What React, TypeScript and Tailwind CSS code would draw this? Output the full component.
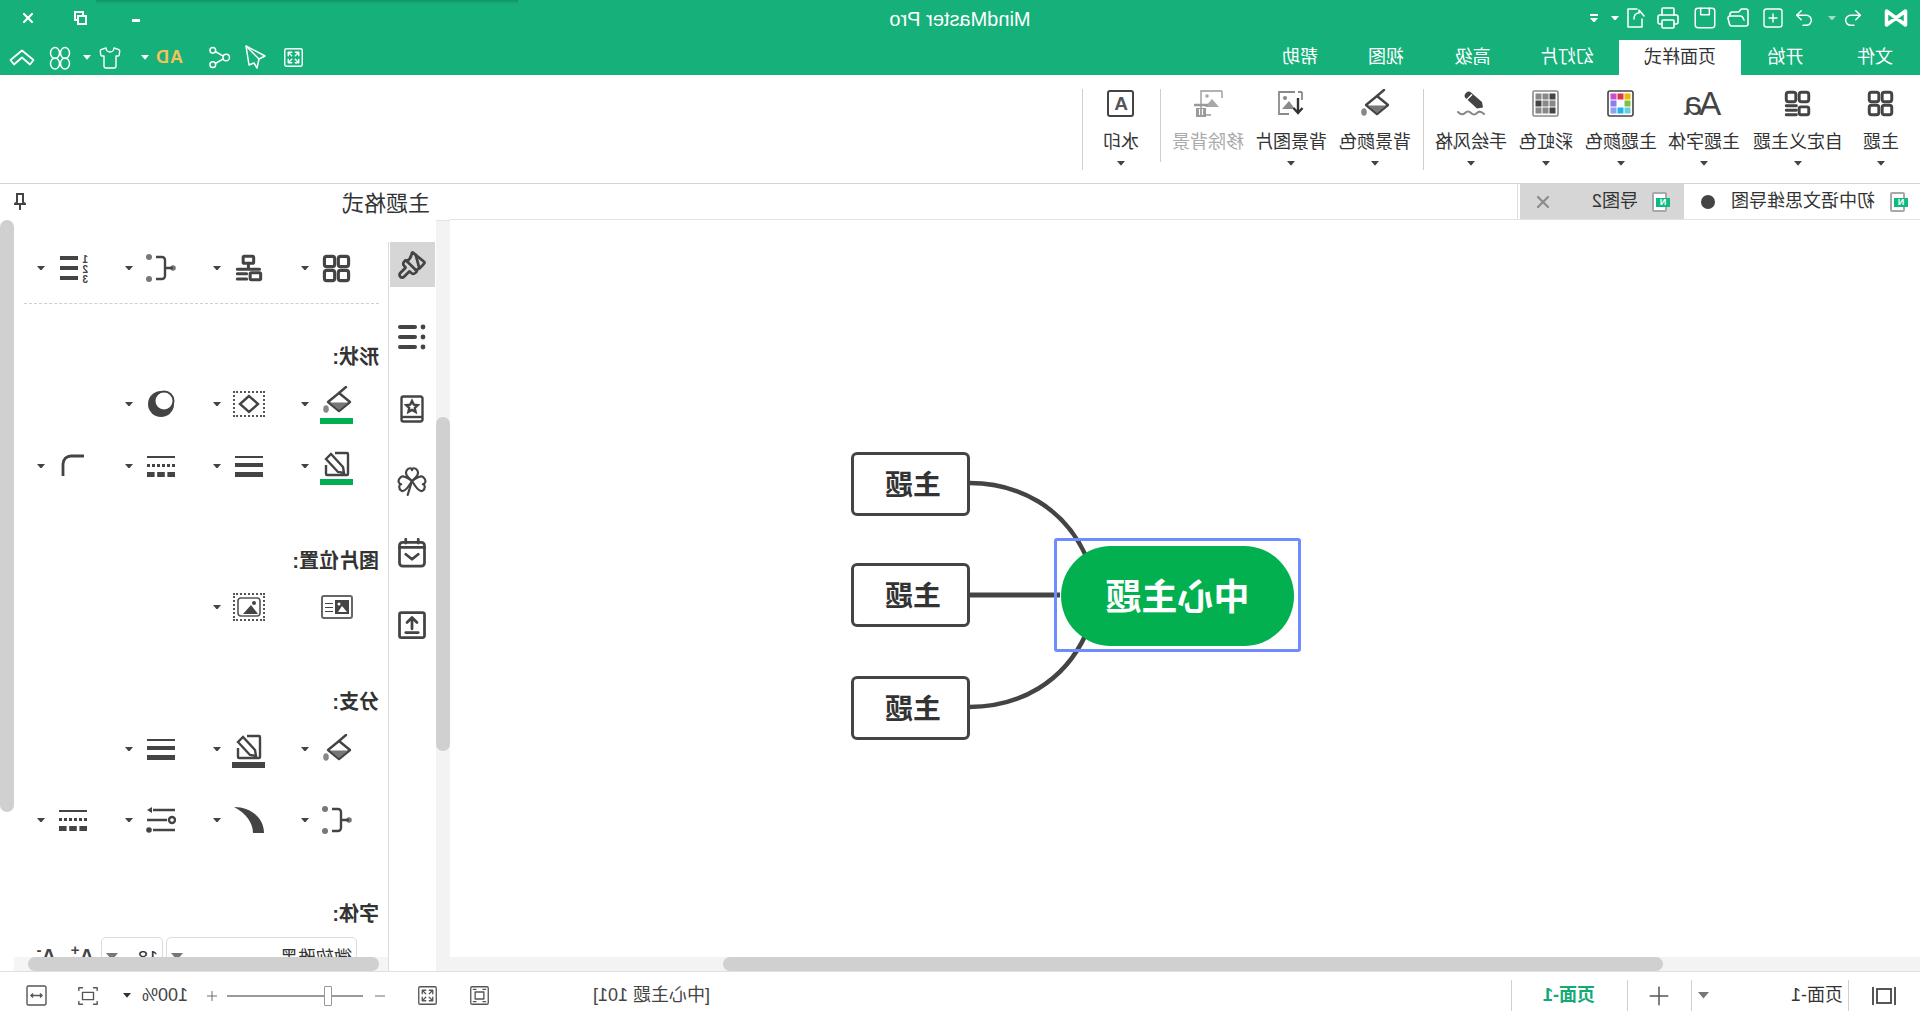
import React from "react";
import { Undo2, Redo2, Printer, FolderOpen, Paintbrush, X, Plus, Minus, Shirt } from "lucide-react";

type P = { size?: number; sw?: number; className?: string; children?: React.ReactNode; h?: number };
const Ic = ({ size = 24, h, sw = 2, className = "", children }: P) => (
  <svg width={size} height={h ?? size} viewBox="0 0 24 24" fill="none" stroke="currentColor" strokeWidth={sw} strokeLinecap="round" strokeLinejoin="round" className={"shrink-0 " + className}>
    {children}
  </svg>
);

const Caret = ({ className = "text-[#8a8a8a]", w = 8 }: { className?: string; w?: number }) => (
  <svg width={w} height={w * 0.6} viewBox="0 0 10 6" className={"shrink-0 " + className}>
    <path d="M0 0h10L5 6z" fill="currentColor" />
  </svg>
);

const Grid4 = ({ size = 27 }: { size?: number }) => (
  <Ic size={size} sw={2.6}>
    <rect x="2" y="2" width="8.5" height="8.5" rx="2" />
    <rect x="13.5" y="2" width="8.5" height="8.5" rx="2" />
    <rect x="2" y="13.5" width="8.5" height="8.5" rx="2" />
    <rect x="13.5" y="13.5" width="8.5" height="8.5" rx="2" />
  </Ic>
);
const Grid3Lines = () => (
  <Ic size={27} sw={2.6}>
    <rect x="2" y="2" width="8.5" height="8.5" rx="2" />
    <rect x="13.5" y="2" width="8.5" height="8.5" rx="2" />
    <rect x="2" y="15" width="8.5" height="7" rx="1.5" />
    <path d="M13 14h9M13 18h9M13 22h9" />
  </Ic>
);
const Palette = () => (
  <svg width="27" height="27" viewBox="0 0 27 27" className="shrink-0">
    <rect x="1" y="1" width="25" height="25" rx="2" fill="#fff" stroke="#444" strokeWidth="1.6" />
    {[
      ["#f3b800", 3.5, 3.5], ["#e0334f", 10.5, 3.5], ["#c84fc8", 17.5, 3.5],
      ["#7dc243", 3.5, 10.5], ["#8d7cf0", 17.5, 10.5],
      ["#6ecbe0", 3.5, 17.5], ["#1cb5ef", 10.5, 17.5], ["#8fa0f5", 17.5, 17.5],
    ].map(([c, x, y], i) => (
      <rect key={i} x={x as number} y={y as number} width="6" height="6" fill={c as string} />
    ))}
  </svg>
);
const Rainbow = () => (
  <svg width="27" height="27" viewBox="0 0 27 27" className="shrink-0">
    <rect x="1" y="1" width="25" height="25" rx="1.5" fill="#fff" stroke="#8a8a8a" strokeWidth="1.6" />
    {[
      ["#444", 3.5, 3.5], ["#888", 10.5, 3.5], ["#888", 17.5, 3.5],
      ["#888", 3.5, 10.5], ["#888", 10.5, 10.5], ["#444", 17.5, 10.5],
      ["#444", 3.5, 17.5], ["#888", 10.5, 17.5], ["#888", 17.5, 17.5],
    ].map(([c, x, y], i) => (
      <rect key={i} x={x as number} y={y as number} width="6" height="6" fill={c as string} />
    ))}
  </svg>
);
const HandDraw = () => (
  <svg width="30" height="27" viewBox="0 0 30 27" className="shrink-0">
    <path d="M3 17.5 4 12 15 2.5c1.500-1.300 3-1.300 4.500 0l1 1c1.300 1.500 1.300 3 0 4.500L9 18.500z" fill="#444" />
    <path d="M14 4.500l6 6" stroke="#fff" strokeWidth="1.5" />
    <path d="M2 24c3-3 5-3 7-1s4 2 6 0 4-2 6 0 4 2 7-1" fill="none" stroke="#888" strokeWidth="2" strokeLinecap="round" />
  </svg>
);
const Bucket = ({ size = 30 }: { size?: number }) => (
  <svg width={size} height={size} viewBox="0 0 30 30" className="shrink-0">
    <path d="M13 7 24 16 13 25 2 16z" fill="#fff" stroke="#444" strokeWidth="2.4" strokeLinejoin="round" />
    <path d="M4 16.500h18L13 24z" fill="#777" />
    <path d="M13 7 6 1" stroke="#444" strokeWidth="2.4" strokeLinecap="round" />
    <ellipse cx="26" cy="23" rx="2.800" ry="3.800" fill="#888" />
  </svg>
);
const BgImage = () => (
  <svg width="27" height="27" viewBox="0 0 27 27" className="shrink-0" fill="none">
    <path d="M9 2h16v22H15" stroke="#8a8a8a" strokeWidth="1.8" />
    <path d="M2 2h4M2 2v8" stroke="#8a8a8a" strokeWidth="1.8" />
    <path d="M9 19l6-8 7 8z" fill="#8a8a8a" />
    <circle cx="19" cy="8" r="2" fill="#8a8a8a" />
    <path d="M6 8v14M1.500 18 6 23l4.500-5" stroke="#333" strokeWidth="2.4" />
  </svg>
);
const RemoveBg = () => (
  <svg width="34" height="27" viewBox="0 0 34 27" className="shrink-0" fill="none">
    <path d="M3 1h21v24H14" stroke="#b2b2b2" strokeWidth="1.8" />
    <path d="M3 1v7" stroke="#b2b2b2" strokeWidth="1.8" />
    <path d="M6 17l7-8 7 8z" fill="#a8a8a8" />
    <circle cx="18" cy="6" r="1.800" fill="#a8a8a8" />
    <path d="M17 15h14" stroke="#999" strokeWidth="2.500" />
    <rect x="19" y="18" width="10" height="9" fill="#999" />
    <path d="M22.500 19v6M25.500 19v6" stroke="#fff" strokeWidth="1.200" />
  </svg>
);
const Watermark = () => (
  <div className="w-[27px] h-[27px] border-[2.5px] border-[#444] rounded-[3px] flex items-center justify-center text-[19px] leading-none font-bold text-[#555]">
    A
  </div>
);

type Rib = { label: string; w: string; icon: React.ReactNode; caret?: boolean; dim?: boolean };
const ribbon: (Rib | "sep" | "sep2" | "sep3")[] = [
  { label: "主题", w: "w-[78px]", icon: <Grid4 />, caret: true },
  { label: "自定义主题", w: "w-[88px]", icon: <Grid3Lines />, caret: true },
  { label: "主题字体", w: "w-[100px]", icon: <span className="text-[33px] leading-[27px] h-[27px] tracking-[-3px] text-[#444]">Aa</span>, caret: true },
  { label: "主题颜色", w: "w-[66px]", icon: <Palette />, caret: true },
  { label: "彩虹色", w: "w-[84px]", icon: <Rainbow />, caret: true },
  { label: "手绘风格", w: "w-[66px]", icon: <HandDraw />, caret: true },
  "sep",
  { label: "背景颜色", w: "w-[96px]", icon: <Bucket />, caret: true },
  { label: "背景图片", w: "w-[72px]", icon: <BgImage />, caret: true },
  { label: "移除背景", w: "w-[94px]", icon: <RemoveBg />, dim: true },
  "sep2",
  { label: "水印", w: "w-[76px]", icon: <Watermark />, caret: true },
  "sep3",
];

const TitleBar = () => (
  <div className="h-[75px] shrink-0 bg-[#16b07a] text-white relative">
    <div className="absolute top-0 left-[1402px] w-[422px] h-[4px] bg-linear-to-b from-[#12946a] to-[#16b07a]" />
    <div className="h-[40px] grid grid-cols-[1fr_auto_1fr] items-start">
      <div className="flex items-center h-[36px]">
        <div className="w-[48px] flex justify-center">
          <svg width="24" height="20" viewBox="0 0 24 20" fill="none" stroke="#fff" strokeWidth="3.5" strokeLinejoin="round">
            <path d="M2.500 3v14l9.500-7 9.500 7V3L12 10z" />
          </svg>
        </div>
        <Undo2 size={22} strokeWidth={1.6} className="ml-[8px] shrink-0" />
        <Caret className="ml-[6px] text-[#9fdcc4]" />
        <Redo2 size={22} strokeWidth={1.6} className="ml-[13px] shrink-0" />
        <Ic size={24} sw={1.4} className="ml-[8px]">
          <rect x="3" y="3" width="18" height="18" rx="2.500" />
          <path d="M12 8v8M8 12h8" />
        </Ic>
        <FolderOpen size={24} strokeWidth={1.6} className="ml-[11px] shrink-0" />
        <Ic size={26} sw={1.4} className="ml-[8px]">
          <rect x="3" y="3" width="18" height="18" rx="2.500" />
          <path d="M8 3v6h8V3" />
        </Ic>
        <Printer size={24} strokeWidth={1.6} className="ml-[12px] shrink-0" />
        <Ic size={24} sw={1.5} className="ml-[9px]">
          <path d="M10 3h9v18H5v-8" />
          <path d="M3 10l5-6 0 3c3 0 5 2 5 6" />
        </Ic>
        <Caret className="ml-[4px] text-white" />
        <div className="ml-[13px] w-[8px] flex flex-col gap-[2px] items-center">
          <div className="w-[8px] h-[2px] bg-white" />
          <Caret className="text-white" />
        </div>
      </div>
      <div className="h-[38px] flex items-center text-[20px]">MindMaster Pro</div>
      <div className="flex items-center justify-end h-[36px]">
        <div className="w-[60px] flex justify-center pt-[4px]"><div className="w-[8px] h-[3px] bg-white" /></div>
        <div className="w-[50px] flex justify-center">
          <svg width="13" height="14" viewBox="0 0 13 14" fill="none" stroke="#fff" strokeWidth="2">
            <rect x="1" y="5" width="8" height="8" />
            <path d="M4 5V1h8v8H9" />
          </svg>
        </div>
        <div className="w-[56px] flex justify-center"><X size={16} strokeWidth={3.2} /></div>
      </div>
    </div>
    <div className="h-[35px] flex items-center">
      {[
        ["文件", "w-[90px]", false],
        ["开始", "w-[89px]", false],
        ["页面样式", "w-[122px]", true],
        ["幻灯片", "w-[104px]", false],
        ["高级", "w-[85px]", false],
        ["视图", "w-[88px]", false],
        ["帮助", "w-[84px]", false],
      ].map(([t, w, a]) => (
        <div key={t as string} className={(w as string) + " h-[35px] shrink-0 flex items-center justify-center text-[18px] " + (a ? "bg-white text-[#333]" : "text-white")}>
          {t as string}
        </div>
      ))}
      <Ic size={21} sw={1.6} className="ml-[954px]">
        <rect x="2" y="2" width="20" height="20" rx="2" />
        <path d="M6 10V6h4M18 10V6h-4M6 14v4h4M18 14v4h-4M6 6l4 4M18 6l-4 4M6 18l4-4M18 18l-4-4" />
      </Ic>
      <svg width="22" height="26" viewBox="0 0 22 26" fill="none" stroke="#fff" strokeWidth="1.5" strokeLinejoin="round" className="ml-[17px] shrink-0">
        <path d="M20 1 1 11l6 3 2 9 3-5 5 2z" />
        <path d="M20 1 7 14" />
      </svg>
      <Ic size={23} sw={1.5} className="ml-[13px]">
        <circle cx="5" cy="12" r="3.400" />
        <circle cx="19" cy="4.500" r="3" />
        <circle cx="19" cy="19.500" r="3" />
        <path d="M8 10.500l8-4.500M8 13.500l8 4.500" />
      </Ic>
      <span className="ml-[25px] w-[28px] shrink-0 text-[18px] font-bold text-[#f5c15b] tracking-[1px]">AD</span>
      <Caret className="ml-[6px] text-white" />
      <Shirt size={24} strokeWidth={1.4} className="ml-[19px] shrink-0" />
      <Caret className="ml-[7px] text-white" />
      <Ic size={24} sw={1.5} className="ml-[11px]">
        <ellipse cx="7" cy="7" rx="4.500" ry="5.500" />
        <ellipse cx="17" cy="7" rx="4.500" ry="5.500" />
        <ellipse cx="7" cy="17.500" rx="4.500" ry="5.500" />
        <ellipse cx="17" cy="17.500" rx="4.500" ry="5.500" />
      </Ic>
      <svg width="26" height="17" viewBox="0 0 26 17" fill="none" stroke="#fff" strokeWidth="1.8" strokeLinejoin="round" className="ml-[13px] shrink-0">
        <path d="M1.500 11 13 1.500 24.500 11l-3.500 4.500L13 8.500 5 15.500z" />
      </svg>
    </div>
  </div>
);

const Ribbon = () => (
  <div className="h-[109px] shrink-0 bg-white border-b border-[#d4d4d4] flex items-start">
    {ribbon.map((r, i) => {
      if (r === "sep") return <div key={i} className="w-px h-[81px] mt-[14px] ml-[14px] bg-[#cfcfcf] shrink-0" />;
      if (r === "sep2") return <div key={i} className="w-px h-[73px] mt-[14px] mr-px bg-[#cfcfcf] shrink-0" />;
      if (r === "sep3") return <div key={i} className="w-px h-[81px] mt-[14px] bg-[#cfcfcf] shrink-0" />;
      return (
        <div key={i} className={r.w + " shrink-0 flex flex-col items-center pt-[15px]"}>
          <div className="h-[27px] flex items-center justify-center text-[#444]">{r.icon}</div>
          <div className={"mt-[12px] h-[26px] leading-[26px] text-[18px] whitespace-nowrap " + (r.dim ? "text-[#aaaaaa]" : "text-[#333]")}>{r.label}</div>
          {r.caret && <Caret className="mt-[6px] text-[#444]" />}
        </div>
      );
    })}
  </div>
);

const FileIcon = () => (
  <div className="relative w-[20px] h-[20px] shrink-0">
    <div className="absolute left-[3px] top-0 w-[15px] h-[20px] border-2 border-[#a8a8a8] rounded-[2px] bg-white" />
    <div className="absolute left-0 top-[6px] w-[14px] h-[9px] bg-[#10b981] text-white text-[9px] leading-[9px] font-bold text-center">N</div>
  </div>
);

const Tabs = () => (
  <div className="h-[36px] shrink-0 flex items-center border-b border-[#e3e3e3] bg-white">
    <div className="w-[236px] h-full flex items-center shrink-0 text-[18px] text-[#333]">
      <div className="ml-[12px]"><FileIcon /></div>
      <span className="ml-[13px] whitespace-nowrap">初中语文思维导图</span>
      <span className="ml-[16px] w-[14px] h-[14px] rounded-full bg-[#444]" />
    </div>
    <div className="w-[164px] h-full flex items-center shrink-0 bg-[#d6d6d6] text-[18px] text-[#333]">
      <div className="ml-[14px]"><FileIcon /></div>
      <span className="ml-[12px] whitespace-nowrap">导图2</span>
      <X size={20} strokeWidth={2.8} className="ml-[39px] text-[#8d8d8d]" />
    </div>
    <div className="w-px h-full ml-[2px] bg-[#dedede]" />
  </div>
);

const Canvas = () => (
  <div className="relative flex-1 bg-white overflow-hidden">
    <svg width="1000" height="600" className="absolute left-0 top-0" fill="none" stroke="#444" strokeWidth="4.5">
      <path d="M951 263C900 263 856 288 834 336" />
      <path d="M951 375H860" strokeWidth="5" />
      <path d="M951 487C900 487 856 462 834 414" />
    </svg>
    {["top-[232px]", "top-[343px]", "top-[456px]"].map((t) => (
      <div
        key={t}
        className={"absolute left-[950px] w-[119px] h-[64px] bg-white border-[3px] border-[#444] rounded-[6px] flex items-center justify-center pt-[4px] pr-[5px] text-[28px] font-bold text-[#333] " + t}
      >
        主题
      </div>
    ))}
    <div className="absolute left-[626px] top-[326px] w-[233px] h-[100px] rounded-full bg-[#02b050] flex items-center justify-center pt-[3px] text-[36px] font-bold text-white">
      中心主题
    </div>
    <div className="absolute left-[619px] top-[318px] w-[247px] h-[114px] border-[3px] border-[#6f8cff] rounded-[3px]" />
  </div>
);

const cell = "w-[88px] h-[40px] shrink-0 flex items-center pl-[25px]";
const Cell = ({ children, caret = true }: { children: React.ReactNode; caret?: boolean }) => (
  <div className={cell}>
    <div className="w-[34px] h-[34px] flex items-center justify-center text-[#444] shrink-0">{children}</div>
    {caret && <Caret className="ml-[11px]" />}
  </div>
);
const Row = ({ className = "", children }: { className?: string; children: React.ReactNode }) => <div className={"flex pl-[9px] " + className}>{children}</div>;
const Label = ({ className = "", children }: { className?: string; children: React.ReactNode }) => (
  <div className={"h-[24px] leading-[24px] pl-[9px] text-[20px] font-bold text-[#333] " + className}>{children}</div>
);

const OrgIcon = () => (
  <Ic size={28} sw={2.600}>
    <rect x="8" y="2" width="9" height="6" rx="1" />
    <path d="M12.500 8v5M3 13h19" />
    <rect x="2" y="16" width="9" height="6" rx="1" />
    <path d="M14 17h8M14 21.500h8" />
  </Ic>
);
const BranchIcon = () => (
  <svg width="30" height="28" viewBox="0 0 30 28" fill="none" stroke="#444" strokeWidth="2.400" className="shrink-0">
    <circle cx="3" cy="14" r="2.800" fill="#777" stroke="none" />
    <path d="M3 14h8M20 3h-6a3 3 0 0 0-3 3v16a3 3 0 0 0 3 3h6" />
    <circle cx="27" cy="3" r="3" fill="#777" stroke="none" />
    <circle cx="27" cy="25" r="3" fill="#777" stroke="none" />
  </svg>
);
const NumList = () => (
  <svg width="30" height="30" viewBox="0 0 30 30" className="shrink-0">
    <text x="0" y="9.500" fontSize="10" fontWeight="bold" fill="#444" fontFamily="Liberation Sans">1</text>
    <text x="0" y="19.500" fontSize="10" fontWeight="bold" fill="#444" fontFamily="Liberation Sans">2</text>
    <text x="0" y="29.500" fontSize="10" fontWeight="bold" fill="#444" fontFamily="Liberation Sans">3</text>
    <rect x="10" y="3" width="18" height="4" fill="#444" />
    <rect x="10" y="13" width="18" height="4" fill="#444" />
    <rect x="10" y="23" width="18" height="4" fill="#444" />
  </svg>
);
const Toggle = () => (
  <svg width="28" height="28" viewBox="0 0 28 28" className="shrink-0">
    <rect x="1" y="1" width="26" height="26" rx="13" fill="#444" />
    <circle cx="11" cy="11" r="9.500" fill="#fff" stroke="#444" strokeWidth="2" />
  </svg>
);
const DotDiamond = () => (
  <div className="w-[32px] h-[26px] border-2 border-dotted border-[#555] flex items-center justify-center">
    <svg width="22" height="20" viewBox="0 0 22 20"><path d="M11 2 20 10 11 18 2 10z" fill="#fff" stroke="#444" strokeWidth="2.400" /></svg>
  </div>
);
const Pencil = ({ bar }: { bar: string }) => (
  <div className="flex flex-col items-center">
    <svg width="27" height="26" viewBox="0 0 27 26" fill="none" stroke="#444" strokeWidth="2.400" className="shrink-0 mt-[4px]">
      <path d="M15 2H3a1 1 0 0 0-1 1v20a1 1 0 0 0 1 1h20a1 1 0 0 0 1-1V14" />
      <path d="M24 8 12 21l-6 1 1-6L19 3z" fill="#fff" />
    </svg>
    <div className={"w-[33px] h-[6px] mt-[2px] shrink-0 " + bar} />
  </div>
);
const LinesIcon = () => (
  <div className="w-[28px] flex flex-col gap-[5px]">
    <div className="h-[2px] bg-[#444]" /><div className="h-[4px] bg-[#444]" /><div className="h-[5px] bg-[#444]" />
  </div>
);
const DashedLines = () => (
  <svg width="28" height="21" viewBox="0 0 28 21" fill="none" stroke="#444" className="shrink-0">
    <path d="M0 1h28" strokeWidth="2" />
    <path d="M0 9.500h28" strokeWidth="3" strokeDasharray="3 2" />
    <path d="M0 18.500h28" strokeWidth="5" strokeDasharray="7.600 2.600" />
  </svg>
);
const Corner = () => (
  <svg width="24" height="24" viewBox="0 0 24 24" fill="none" stroke="#444" strokeWidth="2.800" className="shrink-0">
    <path d="M1 2h13a8 8 0 0 1 8 8v12" />
  </svg>
);
const Curve = () => (
  <svg width="30" height="26" viewBox="0 0 30 26" className="shrink-0">
    <path d="M30 0C12 0 0 12 0 26h11C11 16 18 6 30 0z" fill="#444" />
  </svg>
);
const ListSet = () => (
  <svg width="30" height="26" viewBox="0 0 30 26" fill="none" stroke="#444" strokeWidth="2.400" className="shrink-0">
    <path d="M1 3h22M9 13h20M1 23h22" />
    <path d="M29 3l-5-3v6z" fill="#444" stroke="none" />
    <circle cx="4" cy="13" r="3" />
    <circle cx="27" cy="23" r="2.800" fill="#444" stroke="none" />
  </svg>
);
const ImgLeft = () => (
  <div className="w-[32px] h-[24px] border-2 border-[#666] rounded-[3px] flex items-center p-[2px] gap-[2px]">
    <svg width="14" height="14" viewBox="0 0 14 14"><rect width="14" height="14" fill="#444" /><path d="M2 12 7 6l4 6z" fill="#fff" /><circle cx="10" cy="4" r="1.500" fill="#fff" /></svg>
    <div className="flex-1 flex flex-col gap-[3px]"><div className="h-px bg-[#444]" /><div className="h-px bg-[#444]" /><div className="h-px bg-[#444]" /></div>
  </div>
);
const ImgDot = () => (
  <div className="w-[32px] h-[28px] border-2 border-dotted border-[#555] flex items-center justify-center">
    <svg width="24" height="20" viewBox="0 0 24 20"><rect x="1" y="1" width="22" height="18" rx="3" fill="#fff" stroke="#555" strokeWidth="1.600" /><path d="M3 17 10 8l8 9z" fill="#444" /><circle cx="7" cy="6" r="2" fill="#444" /></svg>
  </div>
);
const ThreeLeaf = () => (
  <svg width="30" height="30" viewBox="0 0 28 28" fill="none" stroke="#444" strokeWidth="2" strokeLinejoin="round" strokeLinecap="round">
    <path d="M14 14C10 10 7 8 9 4 11 1 14 2 14 4 14 2 17 1 19 4 21 8 18 10 14 14Z" />
    <path d="M14 14C10 11 5 8 3 11 0 14 2 17 4 17 2 17 1 21 4 23 7 25 11 19 14 14Z" />
    <path d="M14 14C18 11 23 8 25 11 28 14 26 17 24 17 26 17 27 21 24 23 21 25 17 19 14 14Z" />
    <path d="M14 14 18 27" />
  </svg>
);
const FontStep = ({ sign, className }: { sign: string; className: string }) => (
  <div className={"w-[26px] flex items-start pt-[6px] font-bold text-[#444] whitespace-nowrap " + className}>
    <span className="text-[20px] leading-[26px]">A</span>
    <span className="text-[15px] leading-[14px]">{sign}</span>
  </div>
);

const Panel = () => (
  <div className="w-[450px] shrink-0 flex flex-col bg-white">
    <div className="h-[36px] shrink-0 flex items-center">
      <span className="ml-[20px] mt-[3px] text-[22px] text-[#333] leading-none">主题格式</span>
      <svg width="12" height="18" viewBox="0 0 12 18" className="ml-[316px] shrink-0">
        <path d="M3 1h6v8l2 2H1l2-2z" fill="#fff" stroke="#444" strokeWidth="2" />
        <path d="M6 11v6" stroke="#444" strokeWidth="2" />
      </svg>
    </div>
    <div className="flex-1 flex min-h-0">
      <div className="w-[14px] shrink-0 bg-[#f3f3f3] border-t border-[#e3e3e3]">
        <div className="w-[14px] h-[334px] mt-[196px] bg-[#d0d0d0] rounded-full" />
      </div>
      <div className="w-[47px] shrink-0 pl-px pt-[22px] flex flex-col items-start gap-[27px] text-[#444]">
        <div className="w-[45px] h-[45px] bg-[#d6d6d6] flex items-center justify-center"><Paintbrush size={30} strokeWidth={2.200} className="rotate-90" /></div>
        <div className="w-[45px] h-[45px] flex items-center justify-center">
          <svg width="28" height="26" viewBox="0 0 28 26"><circle cx="3" cy="3" r="2.400" fill="#444" /><circle cx="3" cy="13" r="2.400" fill="#444" /><circle cx="3" cy="23" r="2.400" fill="#444" /><rect x="9" y="1" width="19" height="4" rx="2" fill="#444" /><rect x="9" y="11" width="19" height="4" rx="2" fill="#444" /><rect x="9" y="21" width="19" height="4" rx="2" fill="#444" /></svg>
        </div>
        <div className="w-[45px] h-[45px] flex items-center justify-center">
          <svg width="24" height="28" viewBox="0 0 24 28" fill="none" stroke="#444" strokeWidth="2.400">
            <rect x="1.500" y="1.500" width="21" height="25" rx="2" />
            <path d="M2 22h20" />
            <path d="M12 6l1.800 3.600 4 .5-3 2.800.8 4-3.600-2-3.600 2 .8-4-3-2.800 4-.5z" />
          </svg>
        </div>
        <div className="w-[45px] h-[45px] flex items-center justify-center"><ThreeLeaf /></div>
        <div className="w-[45px] h-[45px] flex items-center justify-center">
          <Ic size={30} sw={2.200}>
            <rect x="2" y="3.500" width="20" height="19" rx="2.500" />
            <path d="M2 7.500h20M7 1v3M17 1v3M7 13l5 4 5-4" />
          </Ic>
        </div>
        <div className="w-[45px] h-[45px] flex items-center justify-center">
          <Ic size={30} sw={2.200}>
            <rect x="2" y="2" width="20" height="20" rx="1.500" />
            <path d="M12 15V7M8 10l4-4 4 4M7 18h10" />
          </Ic>
        </div>
      </div>
      <div className="w-px mt-[22px] shrink-0 bg-[#dddddd]" />
      <div className="w-[374px] shrink-0 flex flex-col">
        <div className="h-[737px] overflow-hidden pt-[28px] text-[#444]">
          <Row>
            <Cell><Grid4 size={29} /></Cell>
            <Cell><OrgIcon /></Cell>
            <Cell><BranchIcon /></Cell>
            <Cell><NumList /></Cell>
          </Row>
          <div className="ml-[9px] w-[355px] mt-[15px] h-px border-t border-dashed border-[#cfcfcf]" />
          <Label className="mt-[41px]">形状:</Label>
          <Row className="mt-[15px]">
            <Cell><div className="flex flex-col items-center pt-[2px]"><Bucket /><div className="w-[33px] h-[6px] mt-[2px] shrink-0 bg-[#00b050]" /></div></Cell>
            <Cell><DotDiamond /></Cell>
            <Cell><Toggle /></Cell>
          </Row>
          <Row className="mt-[22px]">
            <Cell><Pencil bar="bg-[#00b050]" /></Cell>
            <Cell><LinesIcon /></Cell>
            <Cell><DashedLines /></Cell>
            <Cell><Corner /></Cell>
          </Row>
          <Label className="mt-[63px]">图片位置:</Label>
          <Row className="mt-[14px]">
            <Cell caret={false}><ImgLeft /></Cell>
            <Cell><ImgDot /></Cell>
          </Row>
          <Label className="mt-[63px]">分支:</Label>
          <Row className="mt-[15px]">
            <Cell><Bucket /></Cell>
            <Cell><Pencil bar="bg-[#444]" /></Cell>
            <Cell><LinesIcon /></Cell>
          </Row>
          <Row className="mt-[31px]">
            <Cell><BranchIcon /></Cell>
            <Cell><Curve /></Cell>
            <Cell><ListSet /></Cell>
            <Cell><DashedLines /></Cell>
          </Row>
          <Label className="mt-[62px]">字体:</Label>
          <div className="mt-[11px] flex items-start">
            <div className="ml-[31px] w-[191px] h-[36px] border border-[#dcdcdc] rounded-[5px] shrink-0 flex items-start pl-[4px] pr-[4px] pt-[7px] justify-between text-[18px] leading-[26px] text-[#333]">
              微软雅黑
              <Caret className="mt-[8px] text-[#777]" w={12} />
            </div>
            <div className="ml-[3px] w-[62px] h-[36px] border border-[#dcdcdc] rounded-[5px] shrink-0 flex items-start pl-[4px] pr-[4px] pt-[7px] justify-between text-[18px] leading-[26px] text-[#333]">
              18
              <Caret className="mt-[8px] text-[#777]" w={12} />
            </div>
            <FontStep sign="+" className="ml-[7px]" />
            <FontStep sign="-" className="ml-[12px]" />
          </div>
        </div>
        <div className="h-[14px] shrink-0 bg-[#f5f5f5]">
          <div className="ml-[9px] w-[351px] h-[14px] bg-[#d0d0d0] rounded-full" />
        </div>
      </div>
      <div className="w-[14px] shrink-0">
        <div className="w-[14px] h-[592px] bg-[#d0d0d0] rounded-full" />
      </div>
    </div>
  </div>
);

const StatusBar = () => (
  <div className="h-[48px] shrink-0 bg-white border-t border-[#e0e0e0] flex items-center text-[18px] text-[#333]">
    <svg width="24" height="18" viewBox="0 0 24 18" fill="none" stroke="#444" strokeWidth="1.800" className="ml-[24px] shrink-0">
      <rect x="5" y="2" width="14" height="14" />
      <path d="M1 0v18M23 0v18" />
    </svg>
    <div className="ml-[23px] w-px h-[31px] bg-[#d0d0d0] shrink-0" />
    <span className="ml-[5px] w-[52px] shrink-0 whitespace-nowrap">页面-1</span>
    <Caret className="ml-[82px] text-[#777]" w={11} />
    <div className="ml-[6px] w-px h-[31px] bg-[#d0d0d0] shrink-0" />
    <Plus size={30} strokeWidth={1.200} className="ml-[17px] shrink-0 text-[#555]" />
    <div className="ml-[16px] w-px h-[31px] bg-[#d0d0d0] shrink-0" />
    <span className="ml-[32px] w-[52px] shrink-0 whitespace-nowrap font-bold text-[#14a975]">页面-1</span>
    <div className="ml-[31px] w-px h-[31px] bg-[#d0d0d0] shrink-0" />
    <span className="ml-[801px] w-[120px] shrink-0 whitespace-nowrap text-[#444]">[中心主题 101]</span>
    <Ic size={21} sw={1.500} className="ml-[100px] text-[#555]">
      <rect x="2" y="2" width="20" height="20" rx="1.500" />
      <rect x="7" y="8" width="10" height="8" />
      <path d="M5 5h3M16 5h3M5 19h3M16 19h3" />
    </Ic>
    <Ic size={21} sw={1.500} className="ml-[31px] text-[#555]">
      <rect x="2" y="2" width="20" height="20" rx="1.500" />
      <path d="M6 10V6h4M18 10V6h-4M6 14v4h4M18 14v4h-4M6 6l4 4M18 6l-4 4M6 18l4-4M18 18l-4-4" />
    </Ic>
    <Minus size={16} strokeWidth={1.400} className="ml-[29px] shrink-0 text-[#666]" />
    <div className="ml-[9px] w-[136px] h-[2px] bg-[#999] relative shrink-0">
      <div className="absolute left-[31px] -top-[9px] w-[8px] h-[20px] bg-white border border-[#999] rounded-[1px]" />
    </div>
    <Plus size={16} strokeWidth={1.400} className="ml-[7px] shrink-0 text-[#666]" />
    <span className="ml-[16px] w-[48px] shrink-0 whitespace-nowrap text-[#444]">100%</span>
    <Caret className="ml-[9px]" />
    <Ic size={22} sw={1.500} className="ml-[24px] text-[#555]">
      <path d="M2 6V3h4M22 6V3h-4M2 18v3h4M22 18v3h-4" />
      <rect x="6" y="8" width="12" height="8" />
    </Ic>
    <svg width="21" height="21" viewBox="0 0 21 21" fill="none" stroke="#555" strokeWidth="1.400" className="ml-[30px] shrink-0">
      <rect x="1" y="1" width="19" height="19" rx="1.500" />
      <path d="M5 10.500h11M7 8.500l-2 2 2 2M14 8.500l2 2-2 2" />
    </svg>
  </div>
);

export default function App() {
  return (
    <div className="w-[1920px] h-[1019px] overflow-hidden -scale-x-100 bg-white flex flex-col font-['Liberation_Sans','Noto_Sans_CJK_SC',sans-serif]">
      <TitleBar />
      <Ribbon />
      <div className="flex-1 flex min-h-0">
        <div className="w-[1470px] shrink-0 flex flex-col min-w-0">
          <Tabs />
          <Canvas />
          <div className="h-[14px] shrink-0 bg-[#f3f3f3]">
            <div className="ml-[257px] w-[940px] h-[14px] bg-[#d0d0d0] rounded-full" />
          </div>
        </div>
        <Panel />
      </div>
      <StatusBar />
    </div>
  );
}
